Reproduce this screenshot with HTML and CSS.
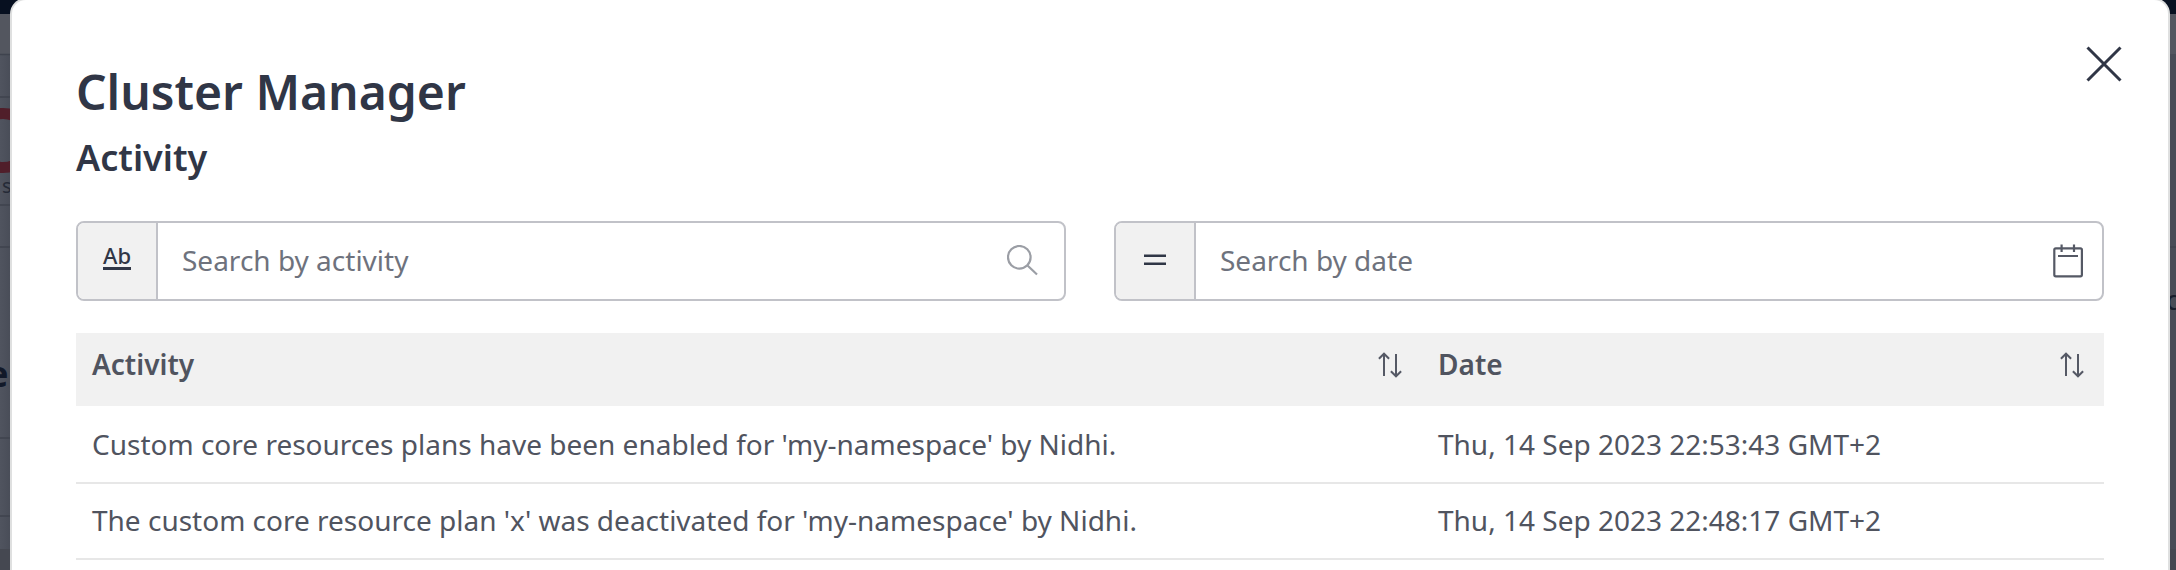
FILE: index.html
```
<!DOCTYPE html>
<html lang="en">
<head>
<meta charset="utf-8">
<title>Cluster Manager</title>
<link rel="stylesheet" href="styles.css">
</head>
<body>
<svg class="backdrop" width="2176" height="570" viewBox="0 0 2176 570" aria-hidden="true">
  <defs>
    <linearGradient id="shadeLeft" x1="0" x2="1" y1="0" y2="0"><stop offset="0" stop-color="#50545f"/><stop offset="1" stop-color="#484c57"/></linearGradient>
  </defs>
  <rect width="2176" height="570" fill="#484c56"/>
  <rect width="12" height="570" fill="url(#shadeLeft)"/>
  <rect width="2176" height="14" fill="#071020"/>
  <rect y="14" width="2176" height="40" fill="#53565f"/>
  <path d="M0 54.5H12M0 97H12M0 205H12M0 247H12M0 438H12M0 516H12M2168 247H2176" stroke="#3f434e" stroke-width="1.5"/>
  <circle cx="3" cy="140.500" r="27" fill="none" stroke="#501e2a" stroke-width="11"/>
  <rect y="549" width="2176" height="21" fill="#454851"/>
  <text class="backdrop-text" x="2" y="193" font-size="20">s</text>
  <text class="backdrop-text strong" x="-13" y="387" font-size="36">e</text>
  <text class="backdrop-text dark" x="2166" y="310" font-size="28">d</text>
</svg>
<main class="modal">
  <header class="modal-header">
    <div>
      <h1 class="title">Cluster Manager</h1>
      <h2 class="subtitle">Activity</h2>
    </div>
    <button class="close" aria-label="Close">
      <svg width="36" height="36" viewBox="0 0 36 36"><path d="M1.5 1.5 34.5 34.5M34.5 1.5 1.5 34.5"/></svg>
    </button>
  </header>
  <section class="filters">
    <div class="field">
      <span class="addon"><span class="match">Ab</span></span>
      <span class="placeholder">Search by activity</span>
      <svg class="icon search" width="32" height="32" viewBox="0 0 32 32"><circle cx="12.3" cy="12.3" r="11.3"/><path d="M20.500 20.500 30 29.500"/></svg>
    </div>
    <div class="field">
      <span class="addon"><svg class="equals" width="22" height="12" viewBox="0 0 22 12"><path d="M0 1.700H22M0 9.700H22"/></svg></span>
      <span class="placeholder">Search by date</span>
      <svg class="icon calendar" width="30" height="34" viewBox="0 0 30 34"><rect x="1.3" y="4.3" width="27.6" height="28" rx="1.5"/><path d="M8.600 0.500V8M21 0.500V8M5 12H25"/></svg>
    </div>
  </section>
  <section class="table">
    <div class="row head">
      <div class="cell"><span>Activity</span><svg class="sort" width="24" height="26" viewBox="0 0 24 26"><path d="M6 24V1.700M.9 6.800 6 1.700l5.100 5.100M18 2V24.300M12.900 19.200 18 24.300l5.100-5.100"/></svg></div>
      <div class="cell"><span>Date</span><svg class="sort" width="24" height="26" viewBox="0 0 24 26"><path d="M6 24V1.700M.9 6.800 6 1.700l5.100 5.100M18 2V24.300M12.900 19.200 18 24.300l5.100-5.100"/></svg></div>
    </div>
    <div class="row first">
      <div class="cell">Custom core resources plans have been enabled for 'my-namespace' by Nidhi.</div>
      <div class="cell">Thu, 14 Sep 2023 22:53:43 GMT+2</div>
    </div>
    <div class="row">
      <div class="cell">The custom core resource plan 'x' was deactivated for 'my-namespace' by Nidhi.</div>
      <div class="cell">Thu, 14 Sep 2023 22:48:17 GMT+2</div>
    </div>
  </section>
</main>
</body>
</html>
```
FILE: styles.css
```
* { box-sizing: border-box; }
body {
  margin: 0;
  height: 570px;
  overflow: hidden;
  background: #484c56;
  font-family: "Noto Sans", sans-serif;
  font-size: 28px;
  color: #50545f;
}
svg { display: block; fill: none; }
.backdrop { position: absolute; top: 0; left: 0; }
.backdrop-text { fill: #252a37; }
.backdrop-text.strong { fill: #121929; font-weight: 700; }
.backdrop-text.dark { fill: #171d2b; }
.modal {
  position: relative;
  width: 2160px;
  height: 572px;
  margin: -2px 0 0 10px;
  padding: 60px 64px 0;
  border: 2px solid #dfe0e0;
  border-bottom: 0;
  border-radius: 16px 16px 0 0;
  background: #fff;
}
.modal-header { display: flex; justify-content: space-between; height: 161px; }
.title { margin: 0; font-size: 48px; line-height: 64px; font-weight: 600; color: #303646; }
.subtitle { margin: 10px 0 0; font-size: 36px; line-height: 48px; font-weight: 600; color: #303646; }
.close {
  width: 36px;
  height: 36px;
  margin: -14px -18px 0 0;
  padding: 0;
  border: 0;
  background: none;
}
.close path { stroke: #303646; stroke-width: 3; }
.filters { display: grid; grid-template-columns: 1fr 1fr; gap: 48px; }
.field {
  display: flex;
  align-items: center;
  height: 80px;
  border: 2px solid #c1c2c8;
  border-radius: 8px;
  overflow: hidden;
}
.addon {
  display: flex;
  justify-content: center;
  align-items: center;
  width: 80px;
  height: 76px;
  border-right: 2px solid #c1c2c8;
  background: #f1f1f1;
}
.match {
  height: 30px;
  margin-bottom: 12px;
  border-bottom: 3px solid #303646;
  font-size: 22px;
  line-height: 31px;
  font-weight: 500;
  color: #303646;
}
.equals { margin-bottom: 2px; }
.equals path { stroke: #303646; stroke-width: 2.6; }
.placeholder { flex: 1; padding: 0 0 2px 24px; line-height: 40px; color: #6e727d; }
.search { margin-right: 25px; stroke: #9b9ea5; stroke-width: 2.2; }
.calendar { margin-right: 19px; stroke: #555965; stroke-width: 2.2; }
.table { margin-top: 32px; }
.row {
  display: grid;
  grid-template-columns: 1346px 1fr;
  height: 76px;
  padding-top: 16px;
  border-bottom: 2px solid #e7e7e7;
  line-height: 40px;
}
.row.first { height: 78px; padding-top: 18px; }
.row.head {
  height: 73px;
  padding-top: 11px;
  border: 0;
  background: #f1f1f1;
  font-weight: 600;
}
.cell { display: flex; justify-content: space-between; padding: 0 16px; white-space: nowrap; }
.sort { margin: 8px 4px 0 0; stroke: #555965; stroke-width: 2; }
```
